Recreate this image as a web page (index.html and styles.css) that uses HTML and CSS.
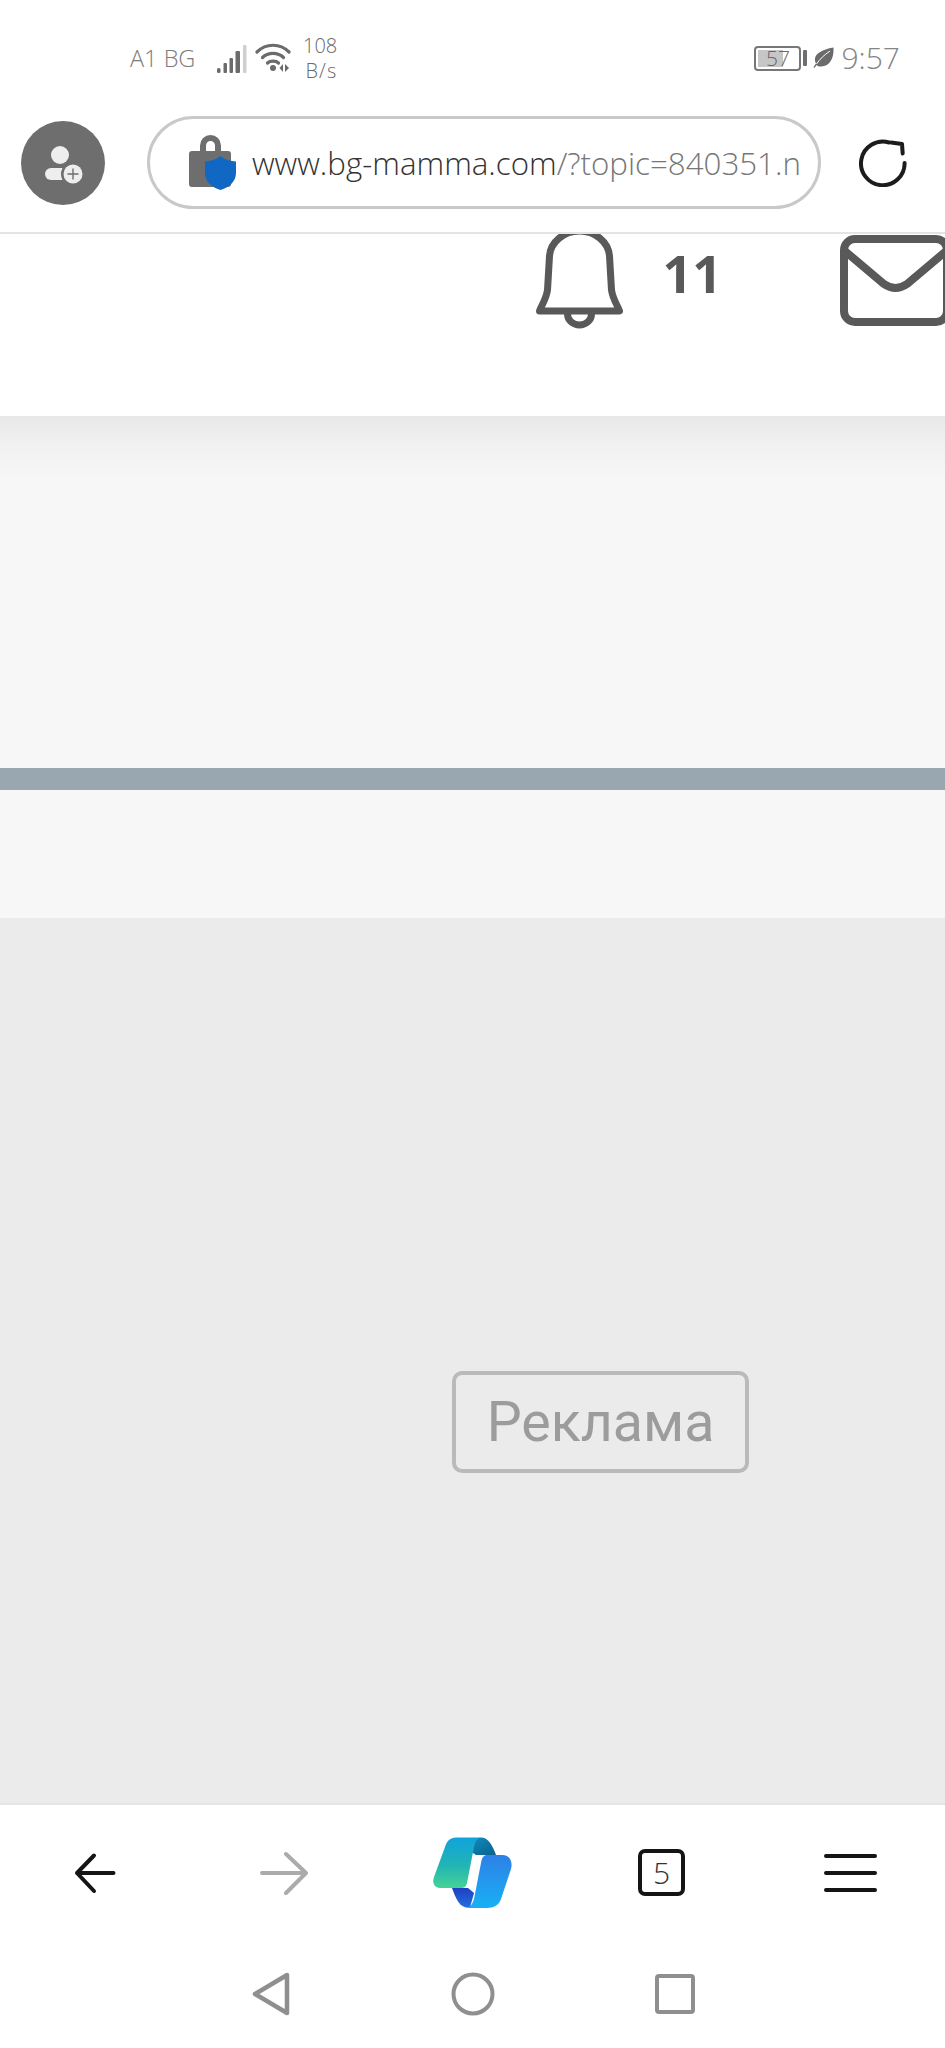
FILE: index.html
```html
<!DOCTYPE html>
<html lang="bg">
<head>
<meta charset="utf-8">
<title>bg-mamma</title>
<link rel="stylesheet" href="styles.css">
</head>
<body>
<div class="page">
  <header class="status">
    <span class="carrier">A1 BG</span>
    <svg class="signal" width="34" height="34" viewBox="0 0 34 34">
      <rect x="3" y="27" width="3.5" height="5" rx="1.5" fill="#6b6b6b"/>
      <rect x="9.5" y="22" width="3.5" height="10" rx="1" fill="#6b6b6b"/>
      <rect x="15.5" y="17" width="3.5" height="15" rx="1" fill="#6b6b6b"/>
      <rect x="21.5" y="10" width="4.5" height="22" rx="1" fill="#6b6b6b"/>
      <rect x="29" y="4" width="3.5" height="28" rx="1" fill="#cfcfcf"/>
    </svg>
    <svg class="wifi" width="36" height="30" viewBox="0 0 36 30">
      <g fill="none" stroke="#6b6b6b" stroke-width="3.2" stroke-linecap="round">
        <path d="M2 9 C11 0 25 0 34 9"/>
        <path d="M7.5 14.5 C13 9 23 9 28.5 14.5"/>
        <path d="M12.5 20 C15 17.5 21 17.5 23.5 20"/>
      </g>
      <circle cx="18" cy="25" r="3" fill="#6b6b6b"/>
      <path d="M28 21 V29 L24.5 25 Z M30 21 V29 L34 25 Z" fill="#6b6b6b"/>
    </svg>
    <div class="speed"><span>108</span><span class="speed-unit">B/s</span></div>
    <div class="battery">
      <div class="battery-shell"><div class="battery-fill"></div><span class="battery-num">57</span></div>
      <div class="battery-nub"></div>
    </div>
    <svg class="leaf" width="21" height="22" viewBox="0 0 21 22">
      <path d="M20.5 0.5 C21 10 18 19 8 19.5 C6 19.5 4.5 19 3.5 18 L1.5 21 L0.5 20 L3 16.5 C-1 9 6 3 20.5 0.5 Z" fill="#6b6b6b"/>
      <path d="M3.500 17 C7 12 11 8 17 4" fill="none" stroke="#ffffff" stroke-width="1"/>
    </svg>
    <span class="clock">9:57</span>
  </header>

  <nav class="toolbar">
    <svg class="avatar" width="84" height="84" viewBox="0 0 84 84">
      <circle cx="42" cy="42" r="42" fill="#6e6e6e"/>
      <circle cx="39" cy="34" r="9" fill="#eeeeee"/>
      <rect x="24" y="47" width="30" height="12" rx="6" fill="#eeeeee"/>
      <circle cx="52" cy="53" r="12" fill="#6e6e6e"/>
      <circle cx="52" cy="53" r="9.5" fill="#eeeeee"/>
      <path d="M52 47.5 V58.5 M46.5 53 H57.5" stroke="#6e6e6e" stroke-width="1.4"/>
    </svg>
    <div class="urlbar">
      <svg class="lock" width="55" height="60" viewBox="0 0 55 60">
        <rect x="4" y="18" width="42" height="36" rx="3" fill="#6e6e6e"/>
        <path d="M18 20 V12.5 a7.5 7.5 0 0 1 15 0 V20" fill="none" stroke="#6e6e6e" stroke-width="6"/>
        <path d="M35.5 23 C40 27 46 28 51 28.5 V40 C51 49 43 55 35.5 57 C28 55 20 49 20 40 V28.5 C25 28 31 27 35.5 23 Z" fill="#1068c4"/>
      </svg>
      <span class="url"><span class="url-host">www.bg-mamma.com</span>/?topic=840351.n</span>
    </div>
    <svg class="reload" width="48" height="48" viewBox="0 0 48 48">
      <path d="M30 3.500 A21.800 21.800 0 1 0 45.600 24" fill="none" stroke="#1c1c1c" stroke-width="4" stroke-linecap="round"/>
      <path d="M32 3.500 L43 5 L43.700 14.500" fill="none" stroke="#1c1c1c" stroke-width="4" stroke-linecap="round" stroke-linejoin="round"/>
    </svg>
  </nav>

  <section class="notif">
    <svg class="bell" width="100" height="100" viewBox="0 0 100 100">
      <path d="M7.5 77 C9 72 14 66 15.5 56 L17.5 22 C18.5 8 32 -3 47.5 -3 C63 -3 76.5 8 77.5 22 L79.5 56 C81 66 86 72 87.5 77 Z" fill="none" stroke="#595959" stroke-width="7" stroke-linejoin="round"/>
      <path d="M35.5 80 a12 11 0 0 0 24 0" fill="none" stroke="#595959" stroke-width="7"/>
    </svg>
    <span class="count">11</span>
    <svg class="mail" width="112" height="94" viewBox="0 0 112 94">
      <rect x="4" y="5" width="103" height="83" rx="11" fill="none" stroke="#595959" stroke-width="8"/>
      <path d="M6 18 L44 50 Q55.500 58 67 50 L105 18" fill="none" stroke="#595959" stroke-width="8" stroke-linecap="round"/>
    </svg>
  </section>

  <div class="band"></div>
  <div class="rule"></div>
  <div class="strip"></div>

  <section class="ad">
    <span class="ad-label">Реклама</span>
  </section>

  <nav class="browser-nav">
    <div class="nav-cell">
      <svg width="48" height="48" viewBox="0 0 48 48">
        <path d="M42.500 24 H6 M23 6.500 L6 24 L23 42" fill="none" stroke="#151515" stroke-width="4" stroke-linecap="round" stroke-linejoin="round"/>
      </svg>
    </div>
    <div class="nav-cell">
      <svg width="48" height="48" viewBox="0 0 48 48">
        <path d="M2 24 H46 M26 5 L46 24 L26 44" fill="none" stroke="#ababab" stroke-width="4" stroke-linecap="round" stroke-linejoin="round"/>
      </svg>
    </div>
    <div class="nav-cell">
      <svg width="79" height="71" viewBox="23 28 79 71">
        <defs>
          <linearGradient id="cTeal" x1="0" y1="0" x2="0" y2="1">
            <stop offset="0" stop-color="#0fa3dd"/>
            <stop offset="0.55" stop-color="#22b4b4"/>
            <stop offset="1" stop-color="#45d395"/>
          </linearGradient>
          <linearGradient id="cDark" x1="0" y1="0" x2="1" y2="1">
            <stop offset="0" stop-color="#0d8fbe"/>
            <stop offset="1" stop-color="#0c5f8e"/>
          </linearGradient>
          <linearGradient id="cBlue" x1="0" y1="0" x2="0" y2="1">
            <stop offset="0" stop-color="#2e80e6"/>
            <stop offset="1" stop-color="#18b0f5"/>
          </linearGradient>
          <linearGradient id="cNavy" x1="0" y1="0" x2="0" y2="1">
            <stop offset="0" stop-color="#1c3fc0"/>
            <stop offset="1" stop-color="#2470e0"/>
          </linearGradient>
        </defs>
        <path d="M42 79 H58 L64 84 L60 98.500 C50 100 46 90 42 79 Z" fill="url(#cNavy)"/>
        <path d="M60 42 C62 32 66 28.500 71 28.500 C78 28.500 82 35 86 46 H66 Z" fill="url(#cDark)"/>
        <path d="M46 28.500 H71 C67 29 65 33 64 38 L57 74 C56 78 54 79 51 79 H30 C24 79 22 73 24 68 L35 38 C37 32 40 28.500 46 28.500 Z" fill="url(#cTeal)"/>
        <path d="M76 46 H92 C100 46 103 53 101 60 L91 90 C89 96 84 99 77 99 H58 C61 97 63 94 64 90 L71 54 C72 49 73 47 76 46 Z" fill="url(#cBlue)"/>
      </svg>
    </div>
    <div class="nav-cell">
      <div class="tabs">5</div>
    </div>
    <div class="nav-cell">
      <div class="menu"><span class="menu-line"></span><span class="menu-line"></span><span class="menu-line"></span></div>
    </div>
  </nav>

  <nav class="system-nav">
    <svg width="48" height="48" viewBox="0 0 48 48">
      <path d="M8 24 L40 5 V43 Z" fill="none" stroke="#8f8f8f" stroke-width="4.500" stroke-linejoin="round"/>
    </svg>
    <svg width="48" height="48" viewBox="0 0 48 48">
      <circle cx="24" cy="24" r="19.500" fill="none" stroke="#8f8f8f" stroke-width="4"/>
    </svg>
    <svg width="48" height="48" viewBox="0 0 48 48">
      <rect x="6" y="6" width="36" height="36" rx="2" fill="none" stroke="#8f8f8f" stroke-width="4"/>
    </svg>
  </nav>
</div>
</body>
</html>
```
FILE: styles.css
```css
* { box-sizing: border-box; }

html, body {
  margin: 0;
  padding: 0;
  background: #ffffff;
}

body {
  font-family: "Open Sans", "Noto Sans", sans-serif;
}

svg {
  display: block;
  flex: none;
}

.page {
  width: 945px;
  height: 2048px;
  display: flex;
  flex-direction: column;
  overflow: hidden;
}

/* Status bar */
.status {
  height: 92px;
  padding: 24px 45px 0 130px;
  display: flex;
  align-items: center;
  color: #7c7c7c;
  font-weight: 300;
}

.carrier {
  font-size: 23.5px;
  width: 84px;
  white-space: nowrap;
}

.wifi {
  margin-left: 7px;
}

.speed {
  margin-left: 12px;
  display: flex;
  flex-direction: column;
  align-items: flex-end;
  font-size: 20px;
  line-height: 25px;
  font-weight: 300;
  color: #6a6a6a;
}

.speed-unit {
  letter-spacing: 1px;
}

.battery {
  margin-left: auto;
  display: flex;
  align-items: center;
  gap: 2px;
}

.battery-shell {
  width: 47px;
  height: 25px;
  border: 2px solid #777777;
  border-radius: 4px;
  padding: 2px;
  display: flex;
  align-items: center;
  justify-content: center;
  position: relative;
}

.battery-fill {
  position: absolute;
  left: 2px;
  top: 2px;
  bottom: 2px;
  width: 25px;
  background: #c6c6c6;
}

.battery-num {
  position: relative;
  font-size: 21px;
  line-height: 1;
  color: #666666;
}

.battery-nub {
  width: 4px;
  height: 16px;
  background: #6e6e6e;
  border-radius: 1px;
}

.leaf {
  margin-left: 6px;
}

.clock {
  margin-left: 7px;
  font-size: 30px;
  line-height: 1;
  color: #858585;
}

/* Toolbar */
.toolbar {
  height: 142px;
  padding: 1px 0 0 21px;
  display: flex;
  align-items: center;
  border-bottom: 2px solid #e4e4e4;
}

.urlbar {
  margin-left: 42px;
  width: 674px;
  height: 93px;
  border: 3px solid #c9c9c9;
  border-radius: 47px;
  padding-left: 35px;
  display: flex;
  align-items: center;
}

.url {
  margin-left: 12px;
  font-size: 31.3px;
  font-weight: 300;
  color: #777777;
  white-space: nowrap;
}

.url-host {
  color: #333333;
}

.reload {
  margin-left: 38px;
}

/* Notification header */
.notif {
  height: 182px;
  display: flex;
  justify-content: flex-end;
  align-items: flex-start;
  overflow: hidden;
}

.count {
  margin-left: 31px;
  margin-top: 8px;
  font-size: 52px;
  line-height: 1.2;
  font-weight: 700;
  color: #595959;
}

.mail {
  margin-left: 118px;
  margin-right: -7px;
}

/* Content bands */
.band {
  height: 352px;
  background: linear-gradient(#e8e8e8, #f0f0f0 24px, #f7f7f7 66px);
}

.rule {
  height: 22px;
  background: #99a8b0;
}

.strip {
  height: 128px;
  background: #f7f7f7;
}

.ad {
  height: 885px;
  padding: 453px 0 0 452px;
  background: #ebebeb;
}

.ad-label {
  display: flex;
  align-items: center;
  justify-content: center;
  width: 297px;
  height: 102px;
  border: 4px solid #bababa;
  border-radius: 10px;
  font-family: Roboto, sans-serif;
  font-size: 55.5px;
  color: #9c9c9c;
}

/* Browser bottom bar */
.browser-nav {
  height: 137px;
  border-top: 2px solid #e4e4e4;
  display: grid;
  grid-template-columns: repeat(5, 1fr);
}

.nav-cell {
  display: flex;
  align-items: center;
  justify-content: center;
}

.tabs {
  width: 47px;
  height: 47px;
  border: 4px solid #151515;
  border-radius: 7px;
  display: flex;
  align-items: center;
  justify-content: center;
  font-size: 30px;
  font-weight: 300;
  color: #333333;
}

.menu {
  width: 53px;
  display: flex;
  flex-direction: column;
  gap: 13px;
}

.menu-line {
  height: 4px;
  border-radius: 2px;
  background: #151515;
}

/* System navigation */
.system-nav {
  height: 108px;
  display: flex;
  align-items: center;
  justify-content: center;
  gap: 154px;
}
```
